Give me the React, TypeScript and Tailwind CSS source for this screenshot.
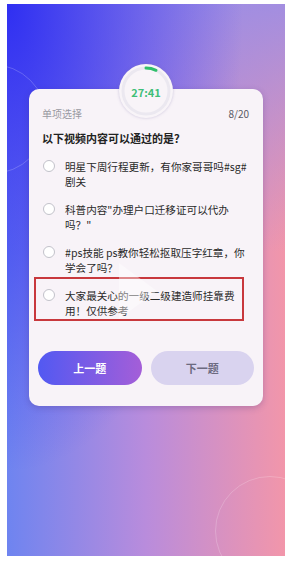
import { useState } from 'react';

const OPTIONS = [
  { id: 'a', lines: ['明星下周行程更新，有你家哥哥吗#sg#', '剧关'] },
  { id: 'b', lines: ['科普内容"办理户口迁移证可以代办', '吗？"'] },
  { id: 'c', lines: ['#ps技能 ps教你轻松抠取压字红章，你', '学会了吗？'] },
  { id: 'd', lines: ['大家最关心的一级二级建造师挂靠费', '用！仅供参考'] },
];

export default function App() {
  const [selected, setSelected] = useState<string | null>(null);

  return (
    <div
      className="w-[293px] h-[566px] bg-white pl-[7px] pr-[8px] pt-[4px] overflow-hidden"
      style={{ fontFamily: '"Noto Sans CJK SC", "Noto Sans", sans-serif' }}
    >
      <div className="relative h-[552px] w-[278px] overflow-hidden bg-[radial-gradient(ellipse_at_top_left,#2f2ff2_0%,rgba(47,47,242,0)_60%),linear-gradient(to_bottom,rgba(154,141,230,0.9)_0%,rgba(154,141,230,0)_45%),linear-gradient(to_right,#6e84f0_0%,#b98cdc_50%,#f296aa_100%)] pt-[85px] px-[22px]">
        {/* faint arcs */}
        <div className="absolute -left-[70px] top-[60px] w-[110px] h-[110px] rounded-full border border-white/20" />
        <div className="absolute -right-[40px] bottom-[-30px] w-[110px] h-[110px] rounded-full border border-white/20" />

        {/* Card */}
        <div className="relative rounded-[10px] bg-[#f8f3f8] shadow-[0_2px_6px_rgba(60,40,120,0.25)] px-[13px] pt-[17px] pb-[21px]">
          {/* Timer */}
          <div className="absolute left-1/2 -translate-x-1/2 -top-[25px] w-[54px] h-[54px] rounded-full bg-[#f8f4f8] shadow-[0_0_3px_rgba(120,110,170,0.35)] flex items-center justify-center">
            <svg className="absolute inset-0" width="54" height="54" viewBox="0 0 54 54">
              <circle cx="27" cy="27" r="23" fill="none" stroke="#ebe8f0" strokeWidth="3" />
              <path d="M27 4 A23 23 0 0 1 37 6.3" fill="none" stroke="#2fbf6a" strokeWidth="3" strokeLinecap="round" />
            </svg>
            <span className="relative text-[11px] font-bold text-[#3fbf78] mt-[2px]">27:41</span>
          </div>

          <div className="flex items-center justify-between text-[10px] text-[#9a9aa2]">
            <span>单项选择</span>
            <span className="text-[#5a5a64] pr-[1px]">8/20</span>
          </div>
          <h2 className="mt-[9px] text-[11px] font-bold text-[#222] leading-[16px]">以下视频内容可以通过的是？</h2>

          <div className="mt-[13px] flex flex-col gap-[13px]">
            {OPTIONS.map((o, i) => (
              <button
                key={o.id}
                onClick={() => setSelected(o.id)}
                className="relative flex items-start gap-[10px] text-left"
              >
                <span
                  className={`ml-[1px] mt-[1px] shrink-0 w-[12px] h-[12px] rounded-full border ${selected === o.id ? 'border-[#6b5fe8] bg-[#6b5fe8]' : 'border-[#c2c2ca] bg-white'}`}
                />
                <span className="flex flex-col text-[10.6px] leading-[15px] text-[#2a2a2a] whitespace-nowrap">
                  {o.lines.map((l) => (
                    <span key={l}>{l}</span>
                  ))}
                </span>
                {i === 3 && (
                  <span className="pointer-events-none absolute -left-[8px] right-[6px] -top-[11px] -bottom-[3px] border-2 border-[#c8383d]" />
                )}
                {i === 3 && (
                  <svg className="pointer-events-none absolute left-[75px] -top-[27px]" width="42" height="60" viewBox="0 0 42 60">
                    <path d="M2 2 L40 30 L2 58 Z" fill="#ffffff" fillOpacity="0.4" />
                  </svg>
                )}
              </button>
            ))}
          </div>

          <div className="mt-[33px] flex gap-[9px] -mx-[4px]">
            <button className="flex-1 h-[34px] rounded-full bg-[linear-gradient(to_right,#5259f2,#a45ed8)] text-white text-[11px] font-bold">
              上一题
            </button>
            <button className="flex-1 h-[34px] rounded-full bg-[#d9d3ef] text-[#6c6a80] text-[11px] font-bold">
              下一题
            </button>
          </div>
        </div>
      </div>
    </div>
  );
}
